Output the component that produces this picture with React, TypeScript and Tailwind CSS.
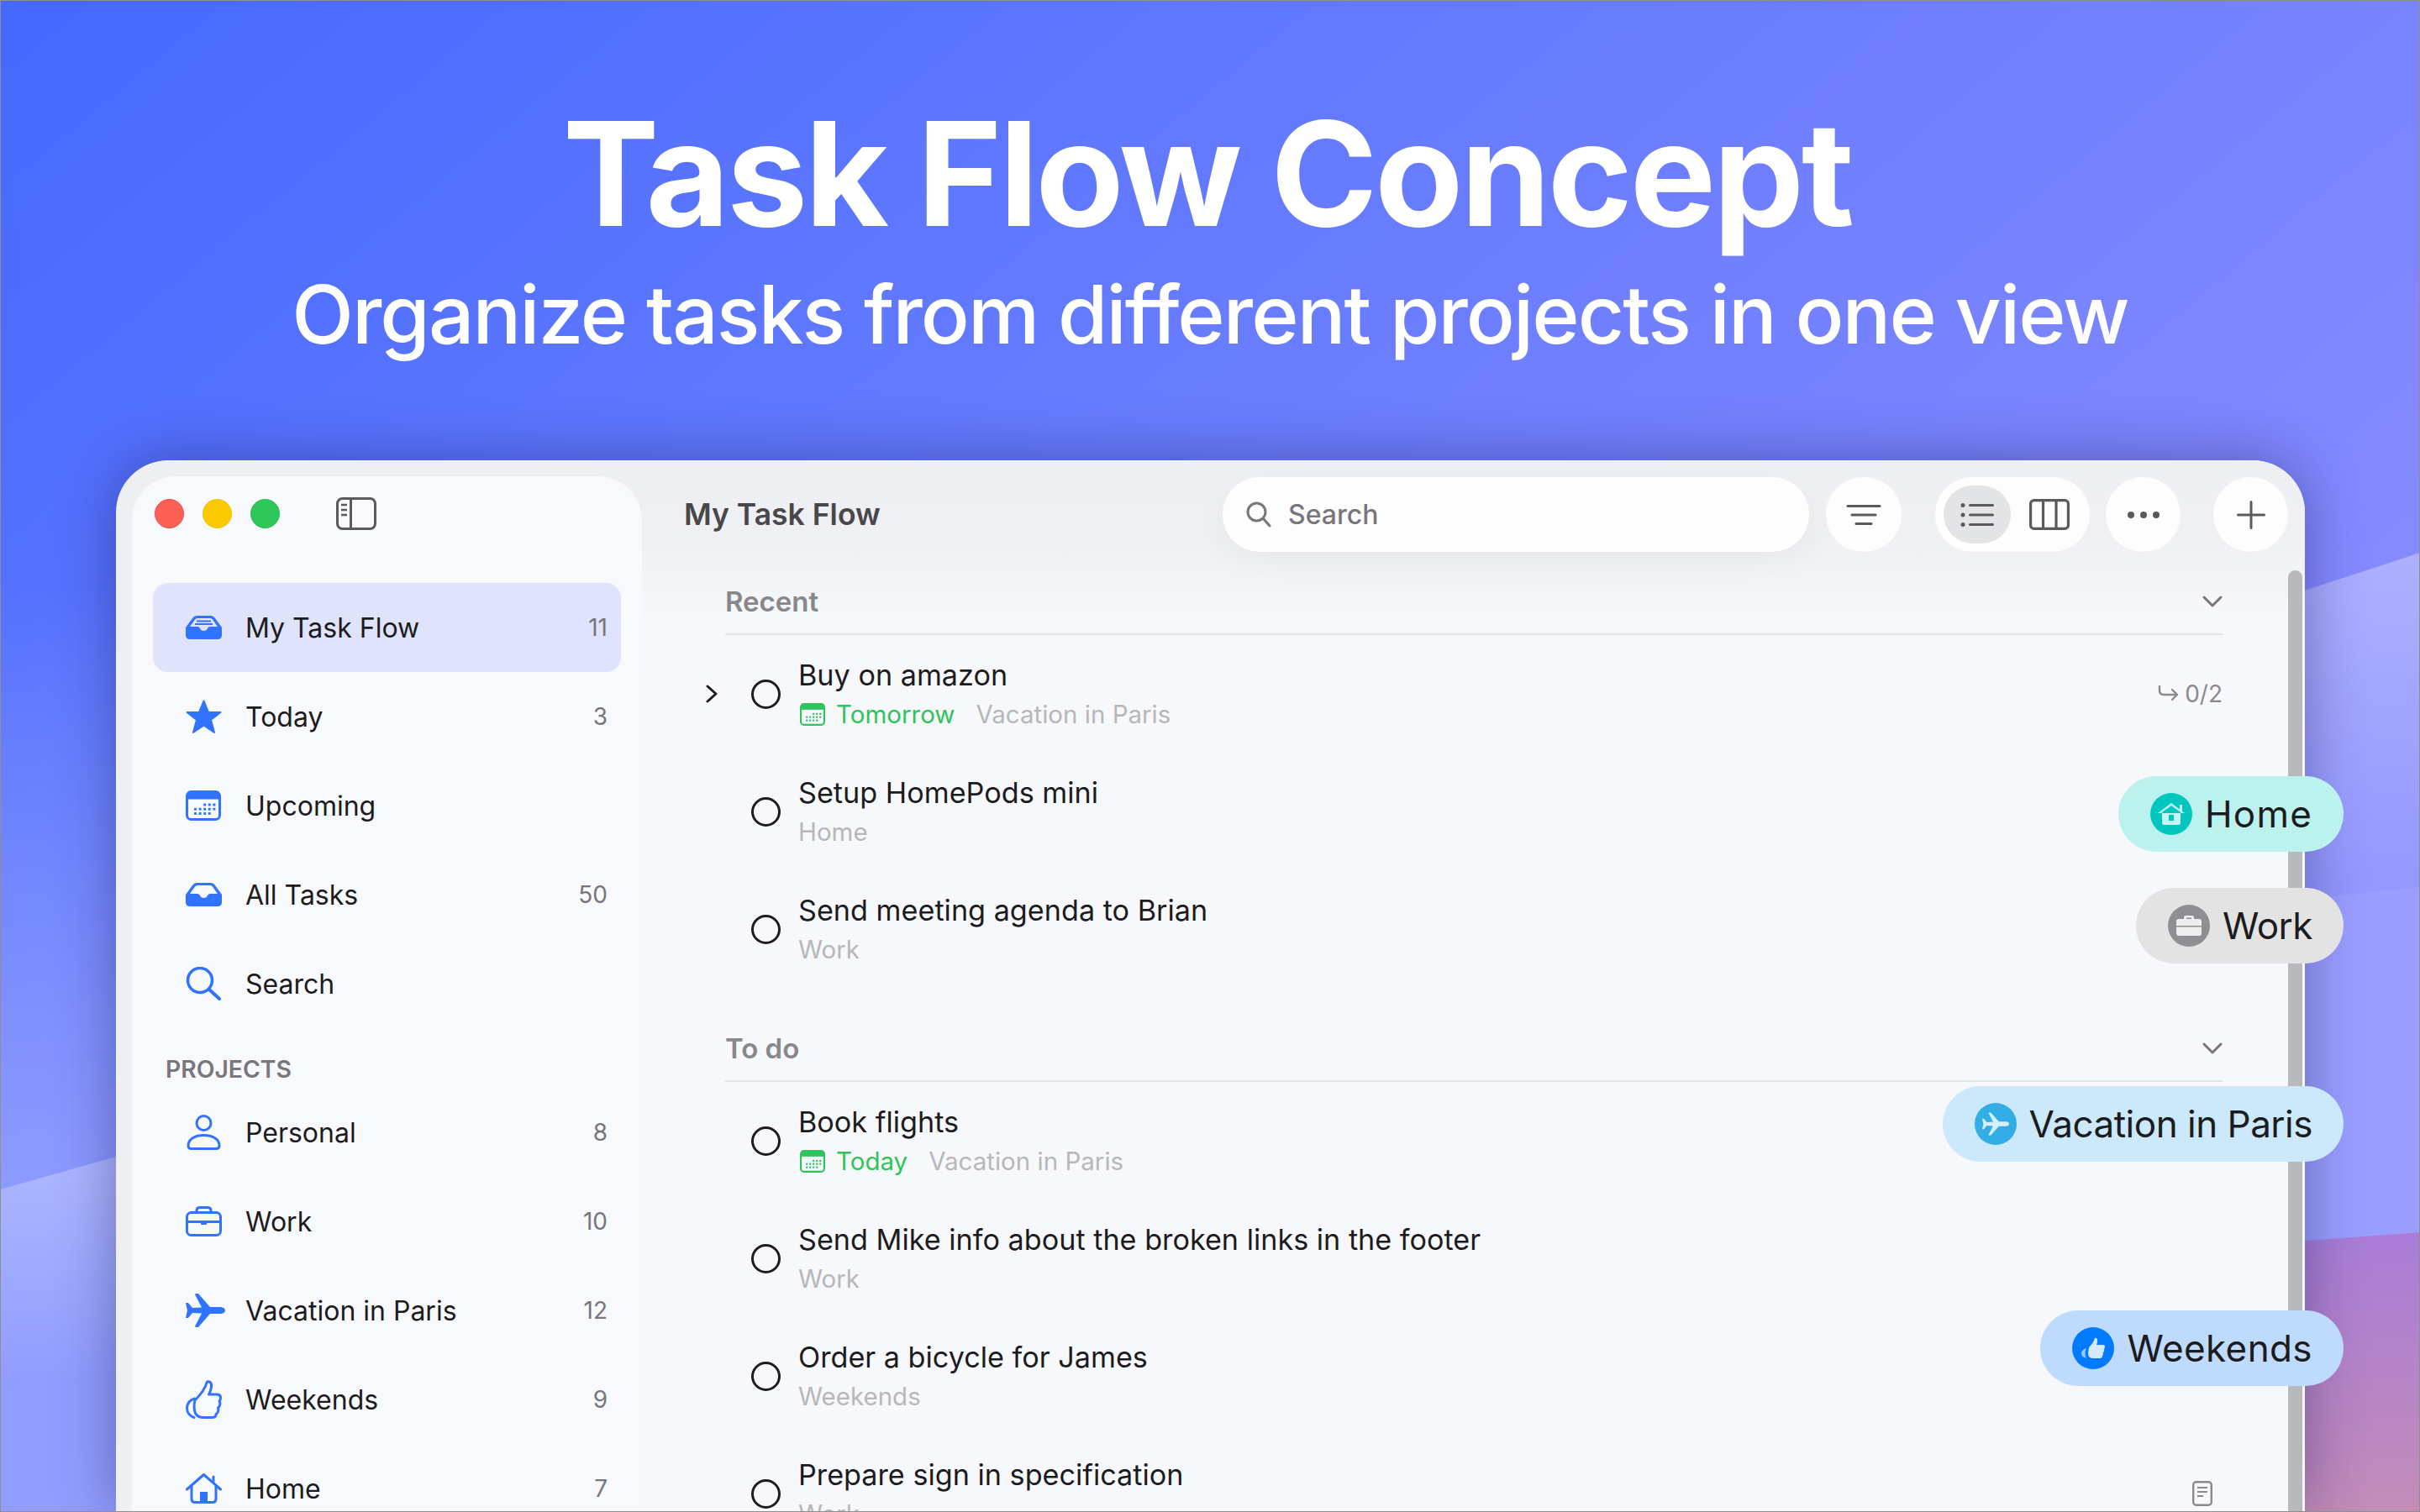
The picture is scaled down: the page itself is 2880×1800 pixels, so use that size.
import React from 'react';

const BLUE = '#3073ff';

function InboxIcon({ paper }: { paper?: boolean }) {
  return (
    <svg width="43" height="28" viewBox="0 0 43 28">
      <path d="M0 14L8 3Q10 0 13 0H30Q33 0 35 3L43 14V23Q43 28 38 28H5Q0 28 0 23Z" fill={BLUE} />
      <path d="M5 13L11 4.5Q12 3 14 3H29Q31 3 32 4.5L38 13H29Q27 13 26 15Q25 18 21.5 18Q18 18 17 15Q16 13 14 13Z" fill={paper ? '#dfe3fc' : '#f8f9fd'} />
      {paper && <path d="M11 10H32M13 6.5H30" stroke={BLUE} strokeWidth="2" />}
    </svg>
  );
}
function StarIcon() {
  return (
    <svg width="43" height="41" viewBox="0 0 43 41">
      <path d="M21.5 1.5L27 15H41.5L30 24L34 39L21.5 30.5L9 39L13 24L1.5 15H16Z" fill={BLUE} stroke={BLUE} strokeWidth="2" strokeLinejoin="round" />
    </svg>
  );
}
function CalendarIcon({ color = BLUE, w = 42, h = 36 }: { color?: string; w?: number; h?: number }) {
  const dots: [number, number][] = [];
  for (let x = 0; x < 5; x++) for (let y = 0; y < 3; y++) {
    if (y === 0 && x < 2) continue;
    if (y === 2 && x === 4) continue;
    dots.push([10 + x * 5.6, 15.5 + y * 5.2]);
  }
  return (
    <svg width={w} height={h} viewBox="0 0 42 36" preserveAspectRatio="none" className="block">
      <rect x="1.5" y="1.5" width="39" height="33" rx="5" fill="none" stroke={color} strokeWidth="3" />
      <path d="M1.5 10V6.5Q1.5 1.5 6.5 1.5H35.5Q40.5 1.5 40.5 6.5V10Z" fill={color} stroke={color} strokeWidth="1" />
      {dots.map(([x, y]) => <rect key={`${x}-${y}`} x={x} y={y} width="3" height="3" rx="0.7" fill={color} />)}
    </svg>
  );
}
function SearchIcon() {
  return (
    <svg width="43" height="40" viewBox="0 0 43 40" fill="none" stroke={BLUE} strokeWidth="3.5" strokeLinecap="round">
      <circle cx="17" cy="16" r="14.5" />
      <path d="M28 27L40 38" strokeWidth="4" />
    </svg>
  );
}
function PersonIcon() {
  return (
    <svg width="43" height="42" viewBox="0 0 43 42" fill="none" stroke={BLUE} strokeWidth="3">
      <circle cx="21.5" cy="10" r="8.5" />
      <path d="M3 37C3 29 11 24.5 21.5 24.5S40 29 40 37Q40 40.5 36 40.5H7Q3 40.5 3 37Z" />
    </svg>
  );
}
function BriefcaseIcon() {
  return (
    <svg width="43" height="36" viewBox="0 0 43 36" fill="none" stroke={BLUE} strokeWidth="3">
      <rect x="1.5" y="7.5" width="40" height="27" rx="5" />
      <path d="M13 7.5V5Q13 1.5 17 1.5H26Q30 1.5 30 5V7.5" />
      <path d="M1.5 18.5H41.5" />
      <rect x="18" y="17" width="7" height="5" rx="1" fill={BLUE} stroke="none" />
    </svg>
  );
}
function PlaneIcon({ color = BLUE, w = 47, h = 40 }: { color?: string; w?: number; h?: number }) {
  return (
    <svg width={w} height={h} viewBox="0 0 47 40">
      <path d="M0 11L3 11L8 17L19 16.5L11 1Q11 0 13 0L15 0L29 16H42Q47 17 47 20Q47 23 42 24H29L15 40H13Q11 40 11 39L19 23.5L8 23L3 29H0L2 20Z" fill={color} />
    </svg>
  );
}
function ThumbIcon() {
  return (
    <svg width="43" height="46" viewBox="0 0 43 46" fill="none" stroke={BLUE} strokeWidth="3" strokeLinejoin="round" strokeLinecap="round">
      <path d="M11 24C15 20 23 11 25 3Q26 1 28 2Q31 3 30.5 8Q30 13 27.5 17H37Q41.5 17 41.5 21Q41.5 24 40 25Q41.5 27 40.5 30Q40 32 38.5 33Q39.5 36 38 38.5Q37 40 36 40.5Q36.5 44.5 31 44.5H21Q12 44.5 10.5 36Q9.5 30 11 24Z" />
      <path d="M10.5 22C4 24 1.5 29 1.5 33.5C1.5 39 5.5 43 10 44.5" />
    </svg>
  );
}
function HomeIcon() {
  return (
    <svg width="43" height="36" viewBox="0 0 43 36" fill="none" stroke={BLUE} strokeWidth="3" strokeLinecap="round" strokeLinejoin="round">
      <path d="M1.5 19L21.5 1.5L41.5 19" />
      <path d="M7 15V30Q7 34.5 11 34.5H32Q36 34.5 36 30V15" />
      <path d="M33 4V10" />
      <rect x="17" y="22" width="9" height="12.5" fill={BLUE} stroke="none" />
    </svg>
  );
}

type NavItem = { label: string; count?: number; icon: React.ReactNode; active?: boolean };

function NavRow({ label, count, icon, active }: NavItem) {
  return (
    <div className={`flex h-[106px] shrink-0 items-center rounded-[18px] pl-[39px] pr-[16px] ${active ? 'bg-[#dfe3fc]' : ''}`}>
      <div className="flex w-[47px] shrink-0 items-center">{icon}</div>
      <div className="ml-[24px] flex-1 pt-[2px] text-[32px] text-[#1c1c1e]">{label}</div>
      {count !== undefined && <div className="text-[28px] text-[#76767b]">{count}</div>}
    </div>
  );
}

function Sidebar() {
  return (
    <aside className="mt-[19px] ml-[19px] flex w-[607px] shrink-0 flex-col rounded-t-[52px] bg-[#f8f9fd] px-[25px]">
      <div className="flex h-[127px] shrink-0 items-start pt-[27px] pl-[2px]">
        <div className="flex items-center gap-[22px]">
          <span className="h-[35px] w-[35px] rounded-full border border-[#f0474a] bg-[#fe5f57]" />
          <span className="h-[35px] w-[35px] rounded-full border border-[#f0c000] bg-[#fcc800]" />
          <span className="h-[35px] w-[35px] rounded-full border border-[#28bd50] bg-[#30c75a]" />
        </div>
        <svg className="-mt-[2px] ml-[67px]" width="48" height="39" viewBox="0 0 48 39" fill="none" stroke="#5a5a5c" strokeWidth="3">
          <rect x="1.5" y="1.5" width="45" height="36" rx="6" />
          <path d="M17.5 1.5V37.5" />
          <path d="M6 9H13M6 15H13M6 21H13" strokeWidth="2.5" />
        </svg>
      </div>
      <NavRow active label="My Task Flow" count={11} icon={<InboxIcon paper />} />
      <NavRow label="Today" count={3} icon={<StarIcon />} />
      <NavRow label="Upcoming" icon={<CalendarIcon />} />
      <NavRow label="All Tasks" count={50} icon={<InboxIcon />} />
      <NavRow label="Search" icon={<SearchIcon />} />
      <div className="flex h-[71px] shrink-0 items-start pt-[33px] pl-[15px] text-[28.3px] leading-[32px] font-semibold text-[#77777c]">PROJECTS</div>
      <NavRow label="Personal" count={8} icon={<PersonIcon />} />
      <NavRow label="Work" count={10} icon={<BriefcaseIcon />} />
      <NavRow label="Vacation in Paris" count={12} icon={<PlaneIcon />} />
      <NavRow label="Weekends" count={9} icon={<ThumbIcon />} />
      <NavRow label="Home" count={7} icon={<HomeIcon />} />
    </aside>
  );
}

function Circle() {
  return <div className="h-[35px] w-[35px] shrink-0 rounded-full border-[3px] border-[#1d1d1f]" />;
}

type Task = { title: string; due?: string; project: string; right?: React.ReactNode; expand?: boolean };

function TaskRow({ title, due, project, right, expand }: Task) {
  return (
    <div className="flex h-[140px] shrink-0 items-center">
      <div className="flex w-[62px] shrink-0 justify-start pl-[8px]">
        {expand && (
          <svg width="14" height="22" viewBox="0 0 14 22" fill="none" stroke="#1d1d1f" strokeWidth="3" strokeLinecap="round" strokeLinejoin="round">
            <path d="M2 2L12 11L2 20" />
          </svg>
        )}
      </div>
      <Circle />
      <div className="ml-[21px] flex flex-1 flex-col">
        <div className="flex h-[48px] items-center pt-[3px] text-[34.2px] text-[#1c1c1e]">{title}</div>
        <div className="flex h-[48px] items-center text-[29.5px] text-[#b6b7bb]">
          {due && (
            <>
              <span className="mr-[13px] ml-[2px]"><CalendarIcon color="#2fc45a" w={30} h={27} /></span>
              <span className="mr-[25px] text-[#2fc45a]">{due}</span>
            </>
          )}
          {project}
        </div>
      </div>
      {right}
    </div>
  );
}

function SectionHeader({ label, top }: { label: string; top: string }) {
  return (
    <div className={`ml-[31px] flex items-center justify-between border-b-2 border-[#e4e5e8] pb-[16px] ${top}`}>
      <span className="text-[33px] leading-[44px] font-semibold text-[#87878c]">{label}</span>
      <svg width="24" height="14" viewBox="0 0 24 14" fill="none" stroke="#77777b" strokeWidth="3" strokeLinecap="round" strokeLinejoin="round">
        <path d="M2 2L12 12L22 2" />
      </svg>
    </div>
  );
}

function Toolbar() {
  return (
    <div className="mt-[20px] flex h-[89px] shrink-0 items-center pl-[50px] pr-[20px]">
      <div className="text-[35.5px] font-semibold text-[#48484a]">My Task Flow</div>
      <div className="ml-auto flex h-[89px] w-[698px] items-center rounded-[44px] bg-[#fdfdfe] pl-[28px] shadow-[0_12px_40px_rgba(0,0,0,0.04)]">
        <svg width="30" height="31" viewBox="0 0 30 31" fill="none" stroke="#77777b" strokeWidth="3" strokeLinecap="round">
          <circle cx="12.5" cy="12.5" r="10.5" />
          <path d="M20.5 20.5L28 29" />
        </svg>
        <span className="ml-[20px] text-[32px] font-medium text-[#77777b]">Search</span>
      </div>
      <button className="ml-[20px] flex h-[89px] w-[90px] items-center justify-center rounded-full bg-[#fdfdfe]">
        <svg width="42" height="26" viewBox="0 0 42 26" fill="none" stroke="#5a5a5c" strokeWidth="3.2" strokeLinecap="round">
          <path d="M2 2.5H40M7 13H35M12 23.5H30" />
        </svg>
      </button>
      <div className="ml-[40px] flex h-[89px] w-[184px] items-center rounded-full bg-[#fdfdfe] pl-[10px]">
        <div className="flex h-[69px] w-[80px] items-center justify-center rounded-full bg-[#e3e4e6]">
          <svg width="40" height="28" viewBox="0 0 40 28" fill="#5a5a5c">
            <circle cx="3" cy="2.5" r="2.5" /><circle cx="3" cy="14" r="2.5" /><circle cx="3" cy="25.5" r="2.5" />
            <rect x="10" y="1" width="30" height="3" rx="1.5" /><rect x="10" y="12.5" width="30" height="3" rx="1.5" /><rect x="10" y="24" width="30" height="3" rx="1.5" />
          </svg>
        </div>
        <svg className="ml-[22px]" width="48" height="37" viewBox="0 0 48 37" fill="none" stroke="#5a5a5c" strokeWidth="3.2">
          <rect x="1.6" y="1.6" width="44.8" height="33.8" rx="4" />
          <path d="M16.5 1.6V35.4M32 1.6V35.4" />
        </svg>
      </div>
      <button className="ml-[19px] flex h-[89px] w-[89px] items-center justify-center rounded-full bg-[#fdfdfe]">
        <svg width="38" height="8" viewBox="0 0 38 8" fill="#5a5a5c">
          <circle cx="4" cy="4" r="4" /><circle cx="19" cy="4" r="4" /><circle cx="34" cy="4" r="4" />
        </svg>
      </button>
      <button className="ml-[39px] flex h-[89px] w-[89px] items-center justify-center rounded-full bg-[#fdfdfe]">
        <svg width="34" height="34" viewBox="0 0 34 34" fill="none" stroke="#5a5a5c" strokeWidth="3" strokeLinecap="round">
          <path d="M17 1.5V32.5M1.5 17H32.5" />
        </svg>
      </button>
    </div>
  );
}

function Subtasks() {
  return (
    <div className="flex items-center gap-[7px] text-[28px] text-[#8a8a8e]">
      <svg width="25" height="22" viewBox="0 0 25 22" fill="none" stroke="#8a8a8e" strokeWidth="2.4" strokeLinecap="round" strokeLinejoin="round">
        <path d="M2 2V7Q2 12 7 12H23M17 6L23 12L17 18" />
      </svg>
      0/2
    </div>
  );
}

function NoteIcon() {
  return (
    <svg width="24" height="30" viewBox="0 0 24 30" fill="none" stroke="#8a8a8e" strokeWidth="2.4" className="mr-[12px]">
      <rect x="1.2" y="1.2" width="21.6" height="27.6" rx="3.5" />
      <path d="M6 8H18M6 13H18M6 18H13" strokeWidth="2" />
    </svg>
  );
}

function MainPane() {
  return (
    <main className="relative flex flex-1 flex-col overflow-hidden">
      <div className="absolute inset-x-0 top-0 h-[190px] bg-gradient-to-b from-[#eeeff2] via-[#eff0f3] to-[#f7f8fb]" />
      <div className="absolute inset-x-0 top-[190px] bottom-0 bg-[#f7f8fb]" />
      <div className="absolute top-[131px] right-[3px] bottom-0 w-[17px] rounded-t-[9px] bg-[#b8b9bd]" />
      <div className="relative flex flex-col">
        <Toolbar />
        <div className="mr-[98px] ml-[68px]">
          <SectionHeader label="Recent" top="pt-[37px]" />
          <TaskRow expand title="Buy on amazon" due="Tomorrow" project="Vacation in Paris" right={<Subtasks />} />
          <TaskRow title="Setup HomePods mini" project="Home" />
          <TaskRow title="Send meeting agenda to Brian" project="Work" />
          <SectionHeader label="To do" top="pt-[50px]" />
          <TaskRow title="Book flights" due="Today" project="Vacation in Paris" />
          <TaskRow title="Send Mike info about the broken links in the footer" project="Work" />
          <TaskRow title="Order a bicycle for James" project="Weekends" />
          <TaskRow title="Prepare sign in specification" project="Work" right={<NoteIcon />} />
        </div>
      </div>
    </main>
  );
}

function Badge({ label, bg, top, icon, dot, track }: { label: string; bg: string; top: string; icon: React.ReactNode; dot: string; track: string }) {
  return (
    <div className={`absolute right-[91px] flex h-[90px] items-center rounded-full pr-[37px] pl-[38px] ${bg} ${top}`}>
      <span className={`flex h-[50px] w-[50px] items-center justify-center rounded-full ${dot}`}>{icon}</span>
      <span className={`ml-[15px] text-[44px] text-[#1c1c1e] ${track}`}>{label}</span>
    </div>
  );
}

export default function App() {
  return (
    <div className="relative flex h-[1800px] w-[2880px] flex-col overflow-hidden font-['Inter','Liberation_Sans',sans-serif]">
      <svg className="absolute inset-0" width="2880" height="1800" viewBox="0 0 2880 1800">
        <defs>
          <linearGradient id="base" gradientUnits="userSpaceOnUse" x1="0" y1="0" x2="1500" y2="1800">
            <stop offset="0" stopColor="#4468ff" />
            <stop offset="0.4" stopColor="#5f78ff" />
            <stop offset="1" stopColor="#868aff" />
          </linearGradient>
          <linearGradient id="edgeL" gradientUnits="userSpaceOnUse" x1="0" y1="700" x2="0" y2="1400">
            <stop offset="0" stopColor="#9aa4ff" stopOpacity="0" />
            <stop offset="1" stopColor="#9aa4ff" stopOpacity="0.75" />
          </linearGradient>
          <linearGradient id="bandL" gradientUnits="userSpaceOnUse" x1="0" y1="1390" x2="0" y2="1640">
            <stop offset="0" stopColor="#fff" stopOpacity="0.28" />
            <stop offset="1" stopColor="#fff" stopOpacity="0.03" />
          </linearGradient>
          <linearGradient id="bandR" gradientUnits="userSpaceOnUse" x1="0" y1="670" x2="0" y2="1050">
            <stop offset="0" stopColor="#fff" stopOpacity="0.32" />
            <stop offset="1" stopColor="#fff" stopOpacity="0.12" />
          </linearGradient>
          <linearGradient id="purple" gradientUnits="userSpaceOnUse" x1="0" y1="1470" x2="0" y2="1800">
            <stop offset="0" stopColor="#a97dd8" />
            <stop offset="1" stopColor="#c38cb8" />
          </linearGradient>
        </defs>
        <rect width="2880" height="1800" fill="url(#base)" />
        <rect width="300" height="1800" fill="url(#edgeL)" />
        <path d="M0 1416L138 1377L600 1250V1800H0Z" fill="url(#bandL)" />
        <path d="M2600 750L2880 658V1800H2600Z" fill="url(#bandR)" />
        <path d="M2600 1085L2880 1056V1800H2600Z" fill="#fff" fillOpacity="0.06" />
        <path d="M2600 1488L2880 1467V1800H2600Z" fill="url(#purple)" />
      </svg>

      <header className="relative flex h-[548px] shrink-0 flex-col items-center text-white">
        <h1 className="mt-[106px] pr-[7px] text-[172px] leading-[200px] font-bold tracking-[-3.4px]">Task Flow Concept</h1>
        <p className="mt-[8px] text-[96px] leading-[120px] font-[550] tracking-[-1.9px]">Organize tasks from different projects in one view</p>
      </header>

      <section className="relative ml-[138px] flex h-[1252px] w-[2605px] overflow-hidden rounded-t-[62px] bg-[#eeeff2] shadow-[0_0_70px_rgba(30,30,90,0.45)]">
        <Sidebar />
        <MainPane />
      </section>

      <Badge label="Home" track="tracking-[1.2px]" top="top-[924px]" bg="bg-[#bcf2ee]" dot="bg-[#00c7be]" icon={
        <svg width="34" height="28" viewBox="0 0 34 28"><path d="M1 13L17 1L27 8.5V3H30V11L33 13M6 12V25Q6 27 8 27H26Q28 27 28 25V12L17 4Z" fill="#c5f5f2" /><rect x="14" y="15" width="6" height="7" fill="#00c7be" /></svg>
      } />
      <Badge label="Work" track="tracking-[-0.5px]" top="top-[1057px]" bg="bg-[#e3e3e3]" dot="bg-[#8e8e93]" icon={
        <svg width="30" height="26" viewBox="0 0 30 26"><path d="M9 5V3Q9 1 11 1H19Q21 1 21 3V5H18V3.5H12V5Z" fill="#eee" /><rect y="5" width="30" height="20" rx="3" fill="#eee" /><rect y="13" width="30" height="1.5" fill="#8e8e93" /></svg>
      } />
      <Badge label="Vacation in Paris" track="tracking-[-0.5px]" top="top-[1293px]" bg="bg-[#cbe9fb]" dot="bg-[#32ade6]" icon={<PlaneIcon color="#d6effb" w={32} h={28} />} />
      <Badge label="Weekends" track="tracking-[0.4px]" top="top-[1560px]" bg="bg-[#bedbfd]" dot="bg-[#007aff]" icon={
        <svg width="30" height="26" viewBox="0 0 30 26"><path d="M10 12C13 9 16 5 17 1Q20 0 20 4Q20 7 19 9H27Q29 9 29 11Q29 13 28 14Q29 16 27 18Q27 21 26 22Q26 25 23 25H15Q9 25 9 19Z" fill="#d6e8fd" /><path d="M7 13C3 14 1 17 1 19C1 22 3 24 7 25C5 22 5 17 7 13Z" fill="#9ac6fb" /></svg>
      } />

      <div className="pointer-events-none absolute inset-0 border border-[#8f8f8f]" />
    </div>
  );
}
